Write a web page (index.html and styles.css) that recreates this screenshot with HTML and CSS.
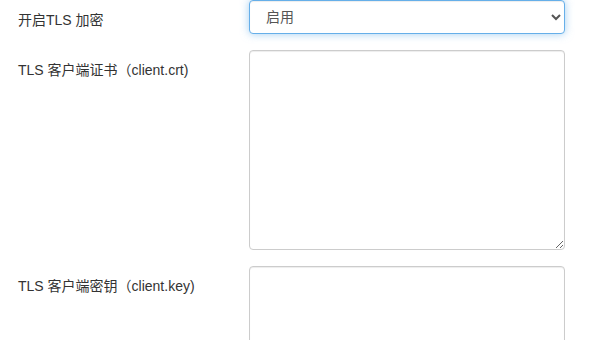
FILE: index.html
```html
<!DOCTYPE html>
<html lang="zh-CN">
<head>
<meta charset="utf-8">
<link rel="stylesheet" href="styles.css">
</head>
<body>
<form class="form">
  <div class="row">
    <label class="label">开启TLS 加密</label>
    <div class="control">
      <select class="input select focused">
        <option>启用</option>
        <option>禁用</option>
      </select>
    </div>
  </div>
  <div class="row">
    <label class="label">TLS 客户端证书（client.crt)</label>
    <div class="control">
      <textarea class="input area"></textarea>
    </div>
  </div>
  <div class="row">
    <label class="label">TLS 客户端密钥（client.key)</label>
    <div class="control">
      <textarea class="input area"></textarea>
    </div>
  </div>
</form>
</body>
</html>
```
FILE: styles.css
```css
html, body {
  margin: 0;
  padding: 0;
  background: #fff;
  overflow: hidden;
}
body {
  font-family: "Liberation Sans", "Noto Sans CJK SC", Arial, sans-serif;
  font-size: 14px;
  color: #333;
}
.form {
  display: flex;
  flex-direction: column;
  gap: 16px;
  padding-left: 18px;
}
.row {
  display: grid;
  grid-template-columns: 231px 316px;
  align-items: start;
}
.label {
  padding-top: 10px;
  line-height: 20px;
  font-size: 14px;
  color: #333;
}
.input {
  display: block;
  box-sizing: border-box;
  width: 316px;
  margin: 0;
  border: 1px solid #ccc;
  border-radius: 4px;
  background: #fff;
  font-family: "Liberation Sans", "Noto Sans CJK SC", Arial, sans-serif;
  font-size: 14px;
  color: #555;
  box-shadow: inset 0 1px 1px rgba(0,0,0,.075);
  outline: none;
}
.select {
  height: 34px;
  padding: 6px 8px 6px 12px;
}
.focused {
  border-color: #66afe9;
  box-shadow: inset 0 1px 1px rgba(0,0,0,.075), 0 0 8px rgba(102,175,233,.6);
}
.area {
  height: 200px;
  padding: 6px 12px;
  resize: vertical;
}
```
